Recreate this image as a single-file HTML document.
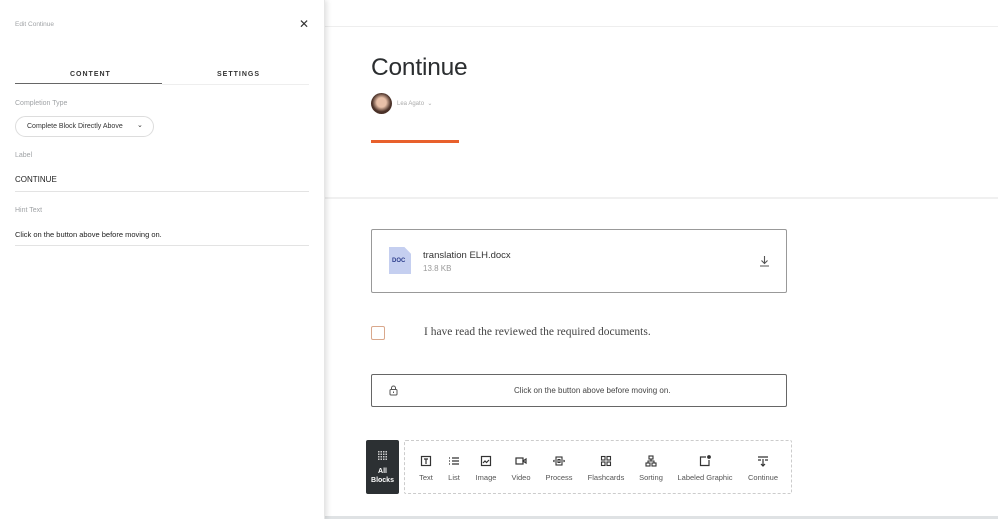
<!DOCTYPE html>
<html><head><meta charset="utf-8"><style>
*{margin:0;padding:0;box-sizing:border-box}
body{width:998px;height:519px;overflow:hidden;background:#fff;font-family:"Liberation Sans",sans-serif;position:relative;color:#313537}
.abs{position:absolute}
.panel{left:0;top:0;width:325px;height:519px;background:#fff;box-shadow:2px 0 5px rgba(0,0,0,.12);z-index:2;border-right:1px solid #e6e6e6}
.lbl{font-size:7px;color:#a0a3a6}
.t{font-size:8px;color:#222}
.icon{position:absolute;top:14px;width:12px;height:12px}
.cap{position:absolute;top:32px;font-size:7.5px;color:#555;white-space:nowrap;transform:translateX(-50%)}
</style></head><body>
<div class="abs panel">
 <div class="abs lbl" style="left:15px;top:21px;font-size:6.5px">Edit Continue</div>
 <div class="abs" style="left:299px;top:17px;font-size:12px;color:#333">✕</div>
 <div class="abs" style="left:70px;top:71px;font-size:7px;font-weight:bold;letter-spacing:1px;color:#333">CONTENT</div>
 <div class="abs" style="left:217px;top:71px;font-size:7px;font-weight:bold;letter-spacing:1px;color:#333">SETTINGS</div>
 <div class="abs" style="left:15px;top:83px;width:147px;height:1px;background:#666"></div>
 <div class="abs" style="left:162px;top:84px;width:147px;height:1px;background:#eee"></div>
 <div class="abs lbl" style="left:15px;top:100px">Completion Type</div>
 <div class="abs" style="left:15px;top:116px;width:139px;height:21px;border:1px solid #ddd;border-radius:11px;font-size:7px;padding:6px 0 0 11px;color:#333">Complete Block Directly Above<span style="position:absolute;left:121px;top:4px;font-size:7px">⌄</span></div>
 <div class="abs lbl" style="left:15px;top:152px">Label</div>
 <div class="abs t" style="left:15px;top:175px">CONTINUE</div>
 <div class="abs" style="left:15px;top:191px;width:294px;height:1px;background:#e3e3e3"></div>
 <div class="abs lbl" style="left:15px;top:207px">Hint Text</div>
 <div class="abs t" style="left:15px;top:230px;font-size:7.5px">Click on the button above before moving on.</div>
 <div class="abs" style="left:15px;top:245px;width:294px;height:1px;background:#e3e3e3"></div>
</div>
<div class="abs" style="left:325px;top:26px;width:673px;height:1px;background:#eee"></div>
<div class="abs" style="left:371px;top:54px;font-size:24.5px;color:#2b2e30;letter-spacing:-.2px">Continue</div>
<div class="abs" style="left:371px;top:93px;width:21px;height:21px;border-radius:50%;background:radial-gradient(circle at 50% 45%,#e8c0a8 30%,#4a3128 60%)"></div>
<div class="abs" style="left:397px;top:100px;font-size:6px;color:#aaa">Lea Agato &nbsp;⌄</div>
<div class="abs" style="left:371px;top:140px;width:88px;height:3px;background:#e8602c"></div>
<div class="abs" style="left:325px;top:197px;width:673px;height:2px;background:#f0f0f0"></div>
<div class="abs" style="left:371px;top:229px;width:416px;height:64px;border:1px solid #999;border-radius:2px"></div>
<div class="abs" style="left:389px;top:247px;width:22px;height:27px;background:#c5cff0;clip-path:polygon(0 0,70% 0,100% 25%,100% 100%,0 100%)"></div>
<div class="abs" style="left:392px;top:258px;font-size:6px;font-weight:bold;color:#2c3d8c">DOC</div>
<div class="abs" style="left:423px;top:250px;font-size:9.5px;color:#333">translation ELH.docx</div>
<div class="abs" style="left:423px;top:264px;font-size:8px;color:#999">13.8 KB</div>
<svg class="abs" style="left:759px;top:255px" width="11" height="12" viewBox="0 0 11 12" fill="none" stroke="#555" stroke-width="1.1"><path d="M5.5 1v7M2.5 5.5l3 3 3-3M1 11h9"/></svg>
<div class="abs" style="left:371px;top:326px;width:14px;height:14px;border:1px solid #d9a88c;border-radius:2px"></div>
<div class="abs" style="left:424px;top:326px;font-family:'Liberation Serif',serif;font-size:11.5px;color:#444">I have read the reviewed the required documents.</div>
<div class="abs" style="left:371px;top:374px;width:416px;height:33px;border:1px solid #666;border-radius:2px"></div>
<svg class="abs" style="left:389px;top:385px" width="9" height="11" viewBox="0 0 9 11" fill="none" stroke="#555" stroke-width="1"><path d="M2.5 4.5V3a2 2 0 0 1 4 0v1.5"/><rect x="1" y="4.5" width="7" height="5.5" rx="1"/><path d="M4.5 6.5v1.5"/></svg>
<div class="abs" style="left:514px;top:386px;font-size:8px;color:#444">Click on the button above before moving on.</div>
<div class="abs" style="left:366px;top:440px;width:33px;height:54px;background:#2c3033;border-radius:2px;color:#fff;text-align:center">
 <svg style="margin-top:11px" width="9" height="9" viewBox="0 0 9 9" fill="#ccc"><rect x="0" y="0" width="1.5" height="1.5"/><rect x="2.5" y="0" width="1.5" height="1.5"/><rect x="5" y="0" width="1.5" height="1.5"/><rect x="7.5" y="0" width="1.5" height="1.5"/><rect x="0" y="2.5" width="1.5" height="1.5"/><rect x="2.5" y="2.5" width="1.5" height="1.5"/><rect x="5" y="2.5" width="1.5" height="1.5"/><rect x="7.5" y="2.5" width="1.5" height="1.5"/><rect x="0" y="5" width="1.5" height="1.5"/><rect x="2.5" y="5" width="1.5" height="1.5"/><rect x="5" y="5" width="1.5" height="1.5"/><rect x="7.5" y="5" width="1.5" height="1.5"/><rect x="0" y="7.5" width="1.5" height="1.5"/><rect x="2.5" y="7.5" width="1.5" height="1.5"/><rect x="5" y="7.5" width="1.5" height="1.5"/><rect x="7.5" y="7.5" width="1.5" height="1.5"/></svg>
 <div style="font-size:7px;font-weight:bold;line-height:9px;margin-top:2px">All<br>Blocks</div>
</div>
<div class="abs" style="left:404px;top:440px;width:388px;height:54px;border:1px dashed #ccc;border-radius:2px">
 <svg class="icon" style="left:15px" viewBox="0 0 12 12" fill="none" stroke="#333" stroke-width="1.2"><rect x="1.5" y="1.5" width="9" height="9"/><path d="M4 4h4M6 4v5"/></svg>
 <svg class="icon" style="left:43px" viewBox="0 0 12 12" fill="none" stroke="#333" stroke-width="1.2"><path d="M1 3h1M1 6h1M1 9h1M4 3h7M4 6h7M4 9h7"/></svg>
 <svg class="icon" style="left:75px" viewBox="0 0 12 12" fill="none" stroke="#333" stroke-width="1.2"><rect x="1.5" y="1.5" width="9" height="9"/><path d="M3 8l2-2 1.5 1.5L9 5"/></svg>
 <svg class="icon" style="left:110px" viewBox="0 0 12 12" fill="none" stroke="#333" stroke-width="1.2"><rect x="1" y="3" width="7" height="6"/><path d="M8 6l3-2v4z"/></svg>
 <svg class="icon" style="left:148px" viewBox="0 0 12 12" fill="none" stroke="#333" stroke-width="1.1"><rect x="3" y="2" width="6" height="8"/><path d="M1.5 5L0.5 6l1 1M10.5 5l1 1-1 1M5 4.5h2v3H5z"/></svg>
 <svg class="icon" style="left:195px" viewBox="0 0 12 12" fill="none" stroke="#333" stroke-width="1.1"><rect x="1.5" y="1.5" width="3.5" height="3.5"/><rect x="7" y="1.5" width="3.5" height="3.5"/><rect x="1.5" y="7" width="3.5" height="3.5"/><rect x="7" y="7" width="3.5" height="3.5"/></svg>
 <svg class="icon" style="left:240px" viewBox="0 0 12 12" fill="none" stroke="#333" stroke-width="1.1"><rect x="4" y="1" width="4" height="3"/><rect x="1" y="8" width="4" height="3"/><rect x="7" y="8" width="4" height="3"/><path d="M6 4v2M3 8V6h6v2"/></svg>
 <svg class="icon" style="left:294px" viewBox="0 0 12 12" fill="none" stroke="#333" stroke-width="1.2"><path d="M7 2H1.5v8.5H10V5"/><circle cx="10" cy="2" r="1.3" fill="#333"/></svg>
 <svg class="icon" style="left:352px" viewBox="0 0 12 12" fill="none" stroke="#333" stroke-width="1.2"><path d="M1 2h10M1 5h3M8 5h3M6 4v7M4 9l2 2 2-2"/></svg>
 <div class="cap" style="left:21px">Text</div>
 <div class="cap" style="left:49px">List</div>
 <div class="cap" style="left:81px">Image</div>
 <div class="cap" style="left:116px">Video</div>
 <div class="cap" style="left:154px">Process</div>
 <div class="cap" style="left:201px">Flashcards</div>
 <div class="cap" style="left:246px">Sorting</div>
 <div class="cap" style="left:300px">Labeled Graphic</div>
 <div class="cap" style="left:358px">Continue</div>
</div>
<div class="abs" style="left:325px;top:516px;width:673px;height:3px;background:#dfe2e4"></div>
</body></html>
